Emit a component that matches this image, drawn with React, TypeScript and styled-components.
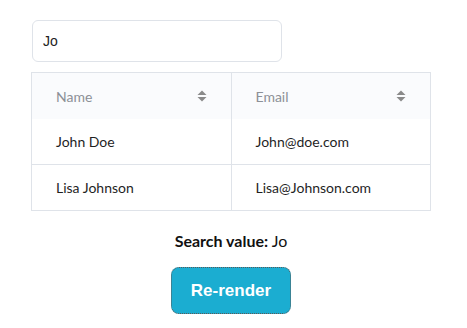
import React, { useState } from 'react'
import styled, { createGlobalStyle } from 'styled-components'

const GlobalStyle = createGlobalStyle`
  body {
    margin: 0;
    background: #ffffff;
    font-family: Lato, "Noto Sans", sans-serif;
  }
`

const Page = styled.div`
  width: 400px;
  padding: 20px 0 0 31px;
  display: flex;
  flex-direction: column;
`

const SearchInput = styled.input`
  box-sizing: border-box;
  width: 250px;
  height: 42px;
  margin: 0 0 10px 1px;
  padding: 0 10px;
  border: 1px solid #dfe3e9;
  border-radius: 6px;
  font-family: "Liberation Sans", Arial, sans-serif;
  font-size: 14px;
  color: #222;
  outline: none;
`

const Table = styled.table`
  width: 400px;
  table-layout: fixed;
  border-collapse: collapse;
  border: 1px solid #dfe3e9;
  font-size: 14px;
`

const HeadRow = styled.tr`
  background: #fafbfd;
`

const HeadCell = styled.th`
  height: 46px;
  padding: 0 24px;
  text-align: left;
  font-weight: 400;
  color: #8c9097;
  border-right: 1px solid #dfe3e9;
  &:last-child {
    border-right: none;
  }
`

const HeadInner = styled.div`
  display: flex;
  align-items: center;
  justify-content: space-between;
`

const Row = styled.tr<{ $divider?: boolean }>`
  border-top: ${(p) => (p.$divider ? '1px solid #dfe3e9' : 'none')};
`

const Cell = styled.td`
  height: 45px;
  padding: 0 24px;
  color: #1f1f1f;
  border-right: 1px solid #dfe3e9;
  &:last-child {
    border-right: none;
  }
`

const Footer = styled.div`
  display: flex;
  flex-direction: column;
  align-items: center;
  padding-top: 20px;
  font-size: 16px;
  color: #111;
`

const Label = styled.strong`
  font-weight: 700;
`

const Button = styled.button`
  margin-top: 17px;
  width: 120px;
  height: 47px;
  border: 1px dotted #5a5a5a;
  border-radius: 8px;
  background: #1badd1;
  color: #fff;
  font-family: "Liberation Sans", Arial, sans-serif;
  font-weight: 700;
  font-size: 17px;
  cursor: pointer;
`

function SortIcon() {
  return (
    <svg width="10" height="12" viewBox="0 0 10 12">
      <path d="M5 0.5 L9.5 5 L0.5 5 Z" fill="#8a8a8a" />
      <path d="M5 11.5 L9.5 7 L0.5 7 Z" fill="#8a8a8a" />
    </svg>
  )
}

const people = [
  { name: 'John Doe', email: 'John@doe.com' },
  { name: 'Lisa Johnson', email: 'Lisa@Johnson.com' },
]

export default function App() {
  const [search, setSearch] = useState('Jo')
  const [, setTick] = useState(0)

  return (
    <Page>
      <GlobalStyle />
      <SearchInput value={search} onChange={(e) => setSearch(e.target.value)} />
      <Table>
        <thead>
          <HeadRow>
            <HeadCell>
              <HeadInner>
                Name <SortIcon />
              </HeadInner>
            </HeadCell>
            <HeadCell>
              <HeadInner>
                Email <SortIcon />
              </HeadInner>
            </HeadCell>
          </HeadRow>
        </thead>
        <tbody>
          {people.map((p, i) => (
            <Row key={p.email} $divider={i > 0}>
              <Cell>{p.name}</Cell>
              <Cell>{p.email}</Cell>
            </Row>
          ))}
        </tbody>
      </Table>
      <Footer>
        <div>
          <Label>Search value:</Label> {search}
        </div>
        <Button onClick={() => setTick((t) => t + 1)}>Re-render</Button>
      </Footer>
    </Page>
  )
}
